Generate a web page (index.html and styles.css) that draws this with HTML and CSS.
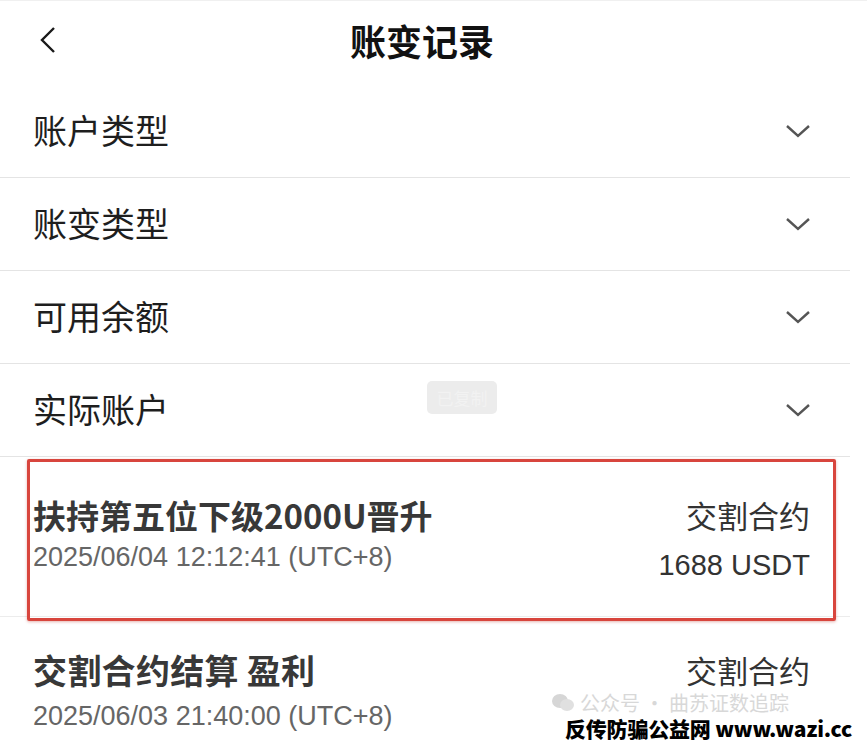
FILE: index.html
```html
<!DOCTYPE html>
<html lang="zh">
<head>
<meta charset="utf-8">
<title>账变记录</title>
<link rel="stylesheet" href="styles.css">
</head>
<body>
<div class="page">
  <header class="topbar">
    <span class="back">
      <svg width="20" height="28" viewBox="0 0 20 28"><path d="M16 2 L4 14 L16 26" fill="none" stroke="#1a1a1a" stroke-width="2.4" stroke-linejoin="miter"/></svg>
    </span>
    <h1 class="title">账变记录</h1>
  </header>

  <section class="filters">
    <div class="filter"><span class="filter-label">账户类型</span><svg class="chev" width="26" height="16" viewBox="0 0 26 16"><path d="M2 3 L13 13 L24 3" fill="none" stroke="#555" stroke-width="2.4"/></svg></div>
    <div class="filter"><span class="filter-label">账变类型</span><svg class="chev" width="26" height="16" viewBox="0 0 26 16"><path d="M2 3 L13 13 L24 3" fill="none" stroke="#555" stroke-width="2.4"/></svg></div>
    <div class="filter"><span class="filter-label">可用余额</span><svg class="chev" width="26" height="16" viewBox="0 0 26 16"><path d="M2 3 L13 13 L24 3" fill="none" stroke="#555" stroke-width="2.4"/></svg></div>
    <div class="filter"><span class="filter-label">实际账户</span><svg class="chev" width="26" height="16" viewBox="0 0 26 16"><path d="M2 3 L13 13 L24 3" fill="none" stroke="#555" stroke-width="2.4"/></svg></div>
    <div class="toast">已复制</div>
  </section>

  <section class="records">
    <div class="record first">
      <div class="rec-left">
        <div class="rec-title">扶持第五位下级2000U晋升</div>
        <div class="rec-date">2025/06/04 12:12:41 (UTC+8)</div>
      </div>
      <div class="rec-right">
        <div class="rec-type">交割合约</div>
        <div class="rec-amount">1688 USDT</div>
      </div>
      <div class="mark-box"></div>
    </div>
    <div class="record second">
      <div class="rec-left">
        <div class="rec-title">交割合约结算 盈利</div>
        <div class="rec-date">2025/06/03 21:40:00 (UTC+8)</div>
      </div>
      <div class="rec-right">
        <div class="rec-type">交割合约</div>
      </div>
    </div>
  </section>

  <div class="wm-faint">
    <svg class="wm-icon" width="22" height="20" viewBox="0 0 22 20"><ellipse cx="8" cy="8" rx="8" ry="7" fill="#d6d6d6"/><ellipse cx="15" cy="12" rx="7" ry="6" fill="#e0e0e0"/></svg>
    <span>公众号 · 曲苏证数追踪</span>
  </div>
  <div class="watermark">反传防骗公益网 www.wazi.cc</div>
</div>
</body>
</html>
```

FILE: styles.css
```css
* { box-sizing: border-box; }
html, body { margin: 0; padding: 0; background: #fff; }
body {
  font-family: "Noto Sans CJK SC", "Noto Sans", sans-serif;
  color: #222;
  width: 867px;
  height: 753px;
  overflow: hidden;
}
.page {
  position: relative;
  width: 867px;
  height: 753px;
  border-top: 1px solid #f0f0f0;
}
.topbar {
  position: relative;
  height: 84px;
  display: flex;
  align-items: center;
  justify-content: center;
}
.back {
  position: absolute;
  left: 38px;
  top: 25px;
  display: flex;
}
.title {
  margin: -6px 23px 0 0;
  font-size: 36px;
  font-weight: 700;
  color: #111;
  line-height: 1;
}
.filters {
  position: relative;
}
.filter {
  height: 93px;
  display: flex;
  align-items: center;
  justify-content: space-between;
  padding: 0 40px 2px 33px;
  border-bottom: 1px solid #e4e4e4;
  margin-right: 17px;
}
.filter-label {
  font-size: 34px;
  font-weight: 400;
  color: #1e1e1e;
  line-height: 1;
}
.chev { margin-right: -1px; margin-top: 2px; }
.toast {
  position: absolute;
  left: 427px;
  top: 296px;
  width: 70px;
  height: 33px;
  border-radius: 5px;
  background: #ececec;
  color: #f2f2f2;
  font-size: 17px;
  display: flex;
  align-items: center;
  justify-content: center;
}
.records { display: flex; flex-direction: column; }
.record {
  position: relative;
  height: 160px;
  display: flex;
  justify-content: space-between;
  align-items: flex-start;
  padding: 38px 40px 0 33px;
  border-bottom: 1px solid #ececec;
  margin-right: 17px;
}
.record.second { padding-top: 33px; }
.rec-left, .rec-right { display: flex; flex-direction: column; }
.rec-right { align-items: flex-end; }
.rec-title {
  font-size: 33px;
  font-weight: 700;
  color: #383838;
  line-height: 40px;
}
.record.second .rec-title { font-size: 34px; letter-spacing: 0.3px; }
.rec-date {
  font-family: "Liberation Sans", Arial, sans-serif;
  font-size: 27px;
  color: #666;
  line-height: 32px;
  margin-top: 6px;
}
.record.second .rec-date { margin-top: 10px; }
.rec-type {
  font-size: 31px;
  color: #333;
  line-height: 40px;
}
.rec-amount {
  font-family: "Liberation Sans", Arial, sans-serif;
  font-size: 29px;
  color: #333;
  line-height: 32px;
  margin-top: 14px;
}
.mark-box {
  position: absolute;
  left: 27px;
  right: 14px;
  top: 2px;
  bottom: -5px;
  border: 3px solid #d8453d;
  border-radius: 2px;
  box-shadow: 0 1px 3px rgba(180, 40, 30, 0.35);
  pointer-events: none;
}
.wm-faint {
  position: absolute;
  left: 552px;
  top: 692px;
  display: flex;
  align-items: center;
  gap: 6px;
  font-size: 20px;
  color: #d8d8d8;
  line-height: 20px;
  height: 20px;
}
.watermark {
  position: absolute;
  left: 560px;
  top: 714px;
  width: 296px;
  height: 26px;
  background: #fff;
  color: #000;
  font-size: 21px;
  font-weight: 900;
  line-height: 26px;
  padding-left: 5px;
  white-space: nowrap;
  letter-spacing: -0.2px;
}
```
